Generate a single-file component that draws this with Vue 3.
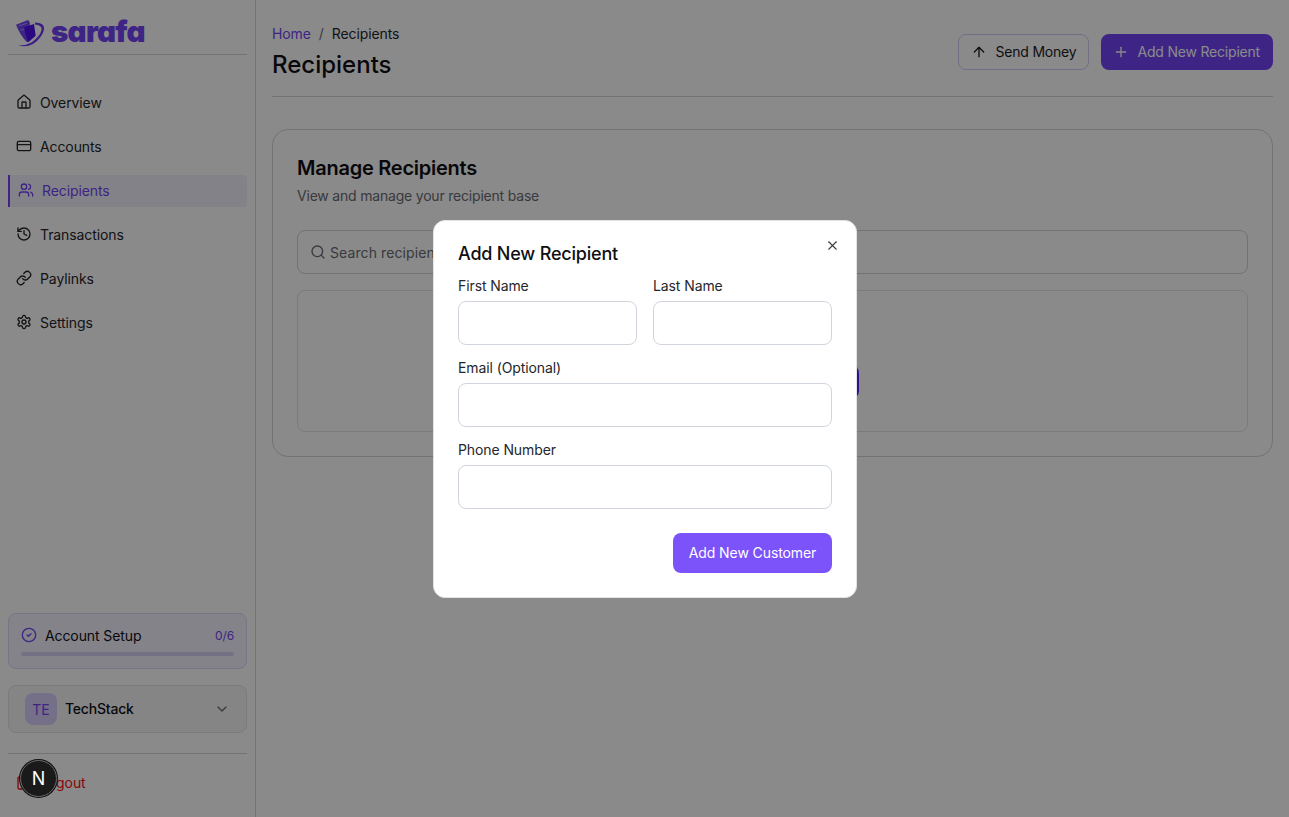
<script setup>
const navItems = [
  { label: 'Overview', icon: 'home' },
  { label: 'Accounts', icon: 'card' },
  { label: 'Recipients', icon: 'users', active: true },
  { label: 'Transactions', icon: 'history' },
  { label: 'Paylinks', icon: 'link' },
  { label: 'Settings', icon: 'gear' },
]
</script>

<template>
  <div class="page">
    <aside class="sidebar">
      <div class="brand">
        <svg class="brand-mark" viewBox="0 0 29 27" width="29" height="27">
          <path d="M0 4.7 L12 0 L14 2.7 L12 22 L10.7 22 Q4 15 0 4.7Z" fill="#7144f6" />
          <path d="M3 6 L11 3.2 M4.5 10.5 L9 8.6" stroke="#b9a4ff" stroke-width="0.9" fill="none" />
          <path d="M8 7.3 L18 4 L19.7 15.7 L12.3 22.3 Q9.5 16 8 7.3Z" fill="#4f10ee" />
          <path d="M19 2.6 Q29 3 28 9.5 Q26.5 17.5 17 24 Q9 27.8 2.3 25 Q9 26 15.5 22.5 Q24.5 16 25.6 9.5 Q26.2 5.4 19 4.6Z" fill="#6a34f6" />
        </svg>
        <span class="wordmark">sarafa</span>
      </div>

      <nav class="nav">
        <a v-for="item in navItems" :key="item.label" class="nav-item" :class="{ active: item.active }">
          <svg class="icon" viewBox="0 0 24 24">
            <template v-if="item.icon === 'home'">
              <path d="M15 21v-8a1 1 0 0 0-1-1h-4a1 1 0 0 0-1 1v8" />
              <path d="M3 10a2 2 0 0 1 .709-1.528l7-5.999a2 2 0 0 1 2.582 0l7 5.999A2 2 0 0 1 21 10v9a2 2 0 0 1-2 2H5a2 2 0 0 1-2-2z" />
            </template>
            <template v-else-if="item.icon === 'card'">
              <rect x="2" y="5" width="20" height="14" rx="2" />
              <path d="M2 10h20" />
            </template>
            <template v-else-if="item.icon === 'users'">
              <path d="M16 21v-2a4 4 0 0 0-4-4H6a4 4 0 0 0-4 4v2" />
              <circle cx="9" cy="7" r="4" />
              <path d="M22 21v-2a4 4 0 0 0-3-3.87" />
              <path d="M16 3.13a4 4 0 0 1 0 7.75" />
            </template>
            <template v-else-if="item.icon === 'history'">
              <path d="M3 12a9 9 0 1 0 9-9 9.75 9.75 0 0 0-6.74 2.74L3 8" />
              <path d="M3 3v5h5" />
              <path d="M12 7v5l4 2" />
            </template>
            <template v-else-if="item.icon === 'link'">
              <path d="M10 13a5 5 0 0 0 7.54.54l3-3a5 5 0 0 0-7.07-7.07l-1.72 1.71" />
              <path d="M14 11a5 5 0 0 0-7.54-.54l-3 3a5 5 0 0 0 7.07 7.07l1.71-1.71" />
            </template>
            <template v-else>
              <path d="M12.22 2h-.44a2 2 0 0 0-2 2v.18a2 2 0 0 1-1 1.73l-.43.25a2 2 0 0 1-2 0l-.15-.08a2 2 0 0 0-2.73.73l-.22.38a2 2 0 0 0 .73 2.73l.15.1a2 2 0 0 1 1 1.72v.51a2 2 0 0 1-1 1.74l-.15.09a2 2 0 0 0-.73 2.73l.22.38a2 2 0 0 0 2.73.73l.15-.08a2 2 0 0 1 2 0l.43.25a2 2 0 0 1 1 1.73V20a2 2 0 0 0 2 2h.44a2 2 0 0 0 2-2v-.18a2 2 0 0 1 1-1.73l.43-.25a2 2 0 0 1 2 0l.15.08a2 2 0 0 0 2.73-.73l.22-.39a2 2 0 0 0-.73-2.73l-.15-.08a2 2 0 0 1-1-1.74v-.5a2 2 0 0 1 1-1.74l.15-.09a2 2 0 0 0 .73-2.73l-.22-.38a2 2 0 0 0-2.73-.73l-.15.08a2 2 0 0 1-2 0l-.43-.25a2 2 0 0 1-1-1.73V4a2 2 0 0 0-2-2z" />
              <circle cx="12" cy="12" r="3" />
            </template>
          </svg>
          <span>{{ item.label }}</span>
        </a>
      </nav>

      <div class="sidebar-bottom">
        <div class="setup">
          <div class="setup-row">
            <svg class="icon setup-icon" viewBox="0 0 24 24">
              <circle cx="12" cy="12" r="10" />
              <path d="m9 12 2 2 4-4" />
            </svg>
            <span class="setup-label">Account Setup</span>
            <span class="setup-count">0/6</span>
          </div>
          <div class="progress"></div>
        </div>

        <div class="org">
          <span class="org-avatar">TE</span>
          <span class="org-name">TechStack</span>
          <svg class="icon org-caret" viewBox="0 0 24 24"><path d="m6 9 6 6 6-6" /></svg>
        </div>

        <div class="logout">
          <svg class="icon logout-icon" viewBox="0 0 24 24">
            <path d="M9 21H5a2 2 0 0 1-2-2V5a2 2 0 0 1 2-2h4" />
            <path d="m16 17 5-5-5-5" />
            <path d="M21 12H9" />
          </svg>
          <span>Logout</span>
        </div>
      </div>
    </aside>

    <main class="main">
      <header class="topbar">
        <div>
          <div class="crumbs">
            <span class="crumb-link">Home</span>
            <span class="crumb-sep">/</span>
            <span>Recipients</span>
          </div>
          <h1 class="page-title">Recipients</h1>
        </div>
        <div class="actions">
          <button class="btn btn-outline">
            <svg class="icon" viewBox="0 0 24 24"><path d="m5 12 7-7 7 7" /><path d="M12 19V5" /></svg>
            Send Money
          </button>
          <button class="btn btn-primary">
            <svg class="icon" viewBox="0 0 24 24"><path d="M5 12h14" /><path d="M12 5v14" /></svg>
            Add New Recipient
          </button>
        </div>
      </header>

      <section class="card">
        <h2 class="card-title">Manage Recipients</h2>
        <p class="card-sub">View and manage your recipient base</p>
        <div class="search">
          <svg class="icon" viewBox="0 0 24 24"><circle cx="11" cy="11" r="8" /><path d="m21 21-4.3-4.3" /></svg>
          <span>Search recipients</span>
        </div>
        <div class="empty">
          <button class="btn btn-primary empty-btn">Add New Recipient</button>
        </div>
      </section>
    </main>

    <div class="overlay">
      <div class="modal">
        <svg class="icon modal-close" viewBox="0 0 24 24"><path d="M18 6 6 18" /><path d="m6 6 12 12" /></svg>
        <h3 class="modal-title">Add New Recipient</h3>
        <div class="form">
          <div class="form-row">
            <label class="field">
              <span>First Name</span>
              <input type="text" />
            </label>
            <label class="field">
              <span>Last Name</span>
              <input type="text" />
            </label>
          </div>
          <label class="field">
            <span>Email (Optional)</span>
            <input type="text" />
          </label>
          <label class="field">
            <span>Phone Number</span>
            <input type="text" />
          </label>
        </div>
        <div class="modal-actions">
          <button class="submit">Add New Customer</button>
        </div>
      </div>
    </div>

    <div class="dev-badge"><span>N</span></div>
  </div>
</template>

<style scoped>
.page {
  position: relative;
  display: flex;
  width: 100%;
  height: 817px;
  overflow: hidden;
  background: #fff;
  color: #101014;
  font-family: Inter, "Liberation Sans", sans-serif;
  font-size: 14px;
  letter-spacing: -0.1px;
}
.icon {
  width: 16px;
  height: 16px;
  flex: none;
  fill: none;
  stroke: currentColor;
  stroke-width: 2;
  stroke-linecap: round;
  stroke-linejoin: round;
}
.sidebar {
  width: 256px;
  flex: none;
  box-sizing: border-box;
  border-right: 1px solid #d9d9dd;
  padding: 0 8px;
  display: flex;
  flex-direction: column;
}
.brand {
  height: 55px;
  box-sizing: border-box;
  border-bottom: 1px solid #d4d4d8;
  display: flex;
  align-items: flex-end;
  gap: 6px;
  padding: 0 0 7px 8px;
}
.brand-mark { flex: none; }
.wordmark {
  font-size: 29.5px;
  line-height: 30px;
  font-weight: 900;
  color: #7144f6;
  font-feature-settings: "cv11";
  letter-spacing: -0.75px;
  margin-bottom: 1px;
}
.nav {
  margin-top: 32px;
  display: flex;
  flex-direction: column;
  gap: 12px;
}
.nav-item {
  height: 32px;
  box-sizing: border-box;
  display: flex;
  align-items: center;
  gap: 8px;
  padding-left: 8px;
  padding-bottom: 2px;
  border-radius: 4px;
  color: #26262c;
}
.nav-item.active {
  background: #f3f1fb;
  color: #7144f6;
  border-left: 2px solid #7144f6;
  border-radius: 0 4px 4px 0;
}
.sidebar-bottom {
  margin-top: auto;
  display: flex;
  flex-direction: column;
}
.setup {
  height: 56px;
  box-sizing: border-box;
  border: 1px solid #dcd6f7;
  border-radius: 8px;
  background: #f4f2fd;
  padding: 11px 12px;
  margin-bottom: 16px;
}
.setup-row { display: flex; align-items: center; height: 20px; }
.setup-icon { color: #7144f6; }
.setup-label { margin-left: 8px; }
.setup-count { margin-left: auto; color: #7144f6; font-size: 12px; }
.progress {
  height: 4px;
  border-radius: 2px;
  background: #d9d1f6;
  margin-top: 7px;
}
.org {
  height: 48px;
  box-sizing: border-box;
  border: 1px solid #e4e4e7;
  border-radius: 8px;
  background: #f6f6f8;
  display: flex;
  align-items: center;
  padding: 0 16px;
  margin-bottom: 20px;
}
.org-avatar {
  width: 32px;
  height: 32px;
  border-radius: 8px;
  background: #d9cff9;
  color: #7144f6;
  display: flex;
  align-items: center;
  justify-content: center;
}
.org-name { margin-left: 8px; font-weight: 500; letter-spacing: -0.2px; padding-bottom: 2px; }
.org-caret { margin-left: auto; color: #6b6b73; }
.logout {
  border-top: 1px solid #d4d4d8;
  height: 64px;
  box-sizing: border-box;
  display: flex;
  align-items: center;
  gap: 8px;
  padding: 0 0 6px 8px;
  color: #ff0a14;
}
.main {
  flex: 1;
  min-width: 0;
  box-sizing: border-box;
  padding: 0 16px;
}
.topbar {
  height: 97px;
  box-sizing: border-box;
  border-bottom: 1px solid #d4d4d8;
  display: flex;
  justify-content: space-between;
  padding-top: 24px;
}
.crumbs { display: flex; gap: 8px; line-height: 20px; color: #26262c; }
.crumb-link { color: #7144f6; }
.crumb-sep { color: #6b6b73; }
.page-title {
  margin: 5px 0 0;
  font-size: 24px;
  line-height: 32px;
  font-weight: 500;
  letter-spacing: 0;
  color: #101014;
}
.actions { display: flex; gap: 12px; margin-top: 10px; }
.btn {
  height: 36px;
  box-sizing: border-box;
  border-radius: 8px;
  font: inherit;
  letter-spacing: -0.2px;
  display: inline-flex;
  align-items: center;
  gap: 8px;
  padding: 0 12px 1px;
}
.btn-outline {
  background: #fff;
  border: 1px solid #d4ccf5;
  color: #1c1c22;
}
.btn-primary {
  background: #7144f6;
  border: 0;
  color: #fff;
  padding-right: 13px;
}
.card {
  margin-top: 32px;
  height: 328px;
  box-sizing: border-box;
  border: 1px solid #d4d4d8;
  border-radius: 16px;
  padding: 24px;
}
.card-title {
  margin: 0;
  font-size: 20px;
  line-height: 28px;
  font-weight: 600;
  letter-spacing: -0.25px;
  color: #101014;
}
.card-sub {
  margin: 2px 0 0;
  line-height: 24px;
  letter-spacing: -0.2px;
  color: #6b6b73;
}
.search {
  margin-top: 22px;
  height: 44px;
  box-sizing: border-box;
  border: 1px solid #d4d4d8;
  border-radius: 8px;
  display: flex;
  align-items: center;
  gap: 4px;
  padding: 0 12px;
  letter-spacing: 0.1px;
  color: #6b6b73;
}
.empty {
  margin-top: 16px;
  height: 142px;
  box-sizing: border-box;
  border: 1px solid #e4e4e7;
  border-radius: 8px;
  display: flex;
  align-items: center;
  justify-content: center;
}
.empty-btn {
  width: 173px;
  height: 34px;
  justify-content: center;
  margin-top: 41px;
  background: #5b1fff;
}
.overlay {
  position: absolute;
  inset: 0;
  padding-left: 1px;
  background: rgba(0, 0, 0, 0.46);
  display: flex;
  align-items: flex-start;
  justify-content: center;
}
.modal {
  position: relative;
  margin-top: 220px;
  width: 424px;
  height: 378px;
  box-sizing: border-box;
  background: #fff;
  border: 1px solid #e4e4e7;
  border-radius: 12px;
  padding: 24px;
}
.modal-close {
  position: absolute;
  top: 17px;
  right: 16px;
  color: #3a3a40;
  width: 15px;
  height: 15px;
  stroke-width: 1.7;
}
.modal-title {
  margin: 0;
  font-size: 18px;
  line-height: 18px;
  font-weight: 500;
  letter-spacing: -0.2px;
  color: #101014;
}
.form {
  margin-top: 13px;
  display: flex;
  flex-direction: column;
  gap: 13px;
}
.form-row {
  display: grid;
  grid-template-columns: 1fr 1fr;
  gap: 16px;
}
.field {
  display: flex;
  flex-direction: column;
  gap: 5px;
  line-height: 20px;
  color: #26262c;
}
.field input {
  height: 44px;
  box-sizing: border-box;
  width: 100%;
  border: 1px solid #d0d5dd;
  border-radius: 8px;
  background: #fff;
  outline: none;
}
.modal-actions {
  display: flex;
  justify-content: flex-end;
  margin-top: 24px;
}
.submit {
  width: 159px;
  height: 40px;
  border: 0;
  border-radius: 8px;
  background: #7c52fb;
  color: #fff;
  font: inherit;
  letter-spacing: -0.1px;
  padding: 0 0 2px;
}
.dev-badge {
  position: absolute;
  left: 20px;
  top: 760px;
  width: 37px;
  height: 37px;
  box-sizing: border-box;
  border-radius: 50%;
  background: #1a1a1a;
  border: 1px solid #6a6a6a;
  color: #fff;
  display: flex;
  align-items: center;
  justify-content: center;
  font-size: 18px;
  font-weight: 400;
  box-shadow: 0 0 0 1px #111;
}
</style>
